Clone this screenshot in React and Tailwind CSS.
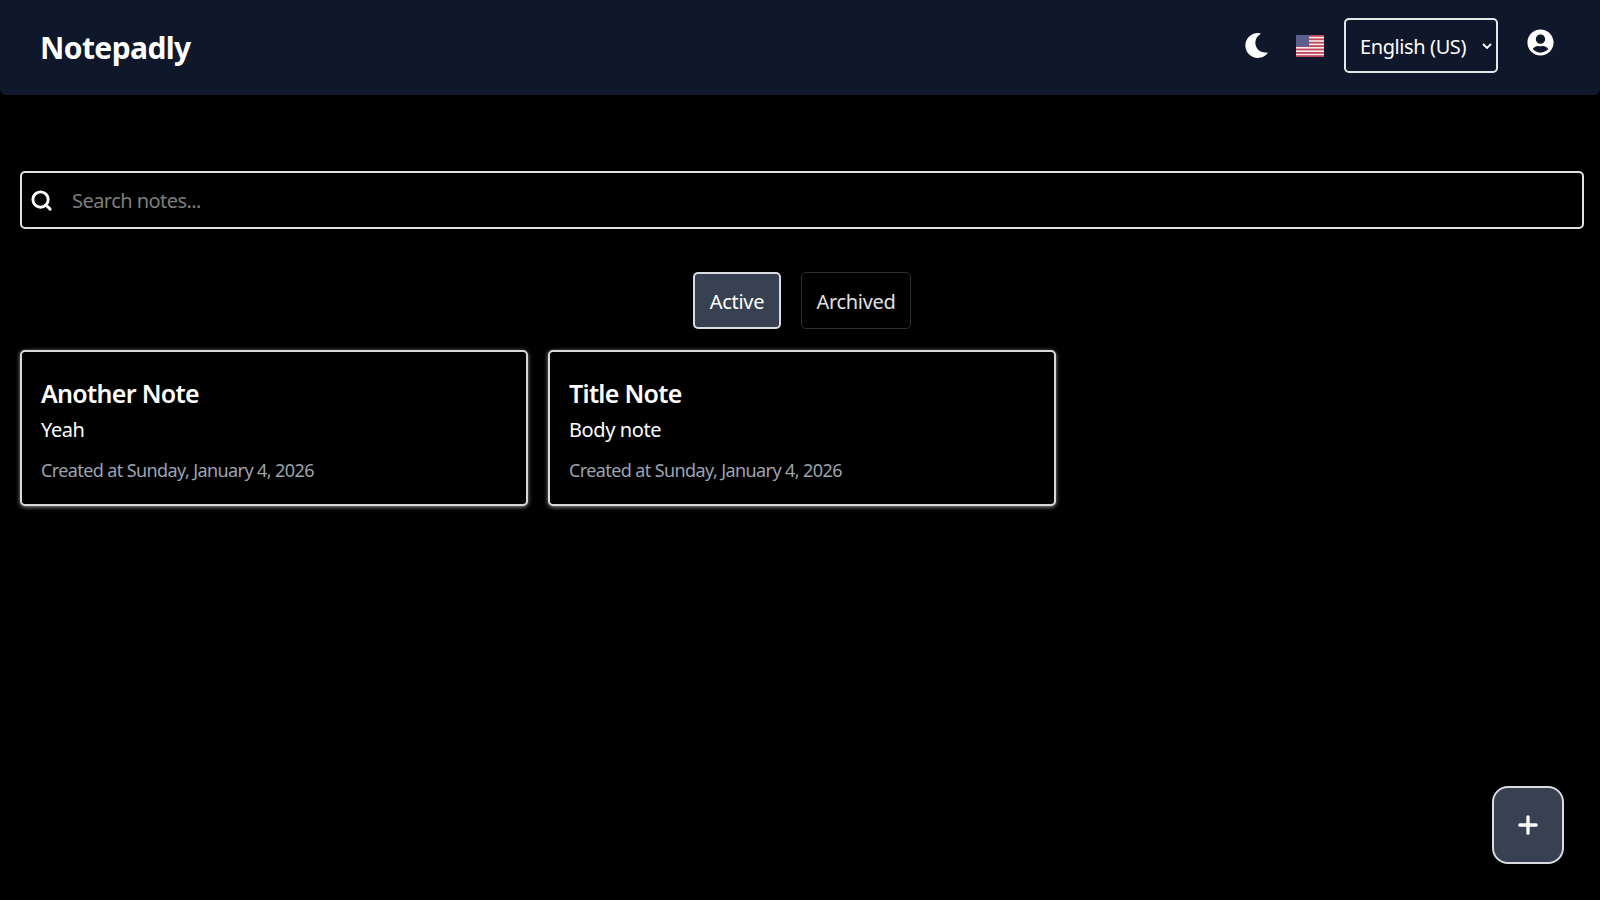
import React from "react";
import { FaMoon, FaUserCircle } from "react-icons/fa";
import { Plus, Search } from "lucide-react";

const notes = [
  { id: 1, title: "Another Note", body: "Yeah", created: "Created at Sunday, January 4, 2026" },
  { id: 2, title: "Title Note", body: "Body note", created: "Created at Sunday, January 4, 2026" },
];

function UsFlag() {
  return (
    <svg width="28" height="22" viewBox="0 0 28 22" className="block">
      <rect width="28" height="22" fill="#f3eeee" />
      {[0, 3.4, 6.8, 10.2, 13.6, 17, 20.2].map((y) => (
        <rect key={y} x="0" y={y} width="28" height="1.8" fill="#c2445a" />
      ))}
      <rect width="13" height="11.5" fill="#5a5f8c" />
    </svg>
  );
}

function NoteCard({ note }) {
  return (
    <div className="h-[156px] rounded-[5px] border-2 border-[#d8d8d8] bg-black pt-[22px] pl-[19px] shadow-[0_1px_4px_rgba(255,255,255,0.6)]">
      <h2 className="text-[25px] leading-[38px] font-semibold tracking-[-0.7px] text-white">{note.title}</h2>
      <p className="mt-[3px] text-[20px] leading-[30px] tracking-[-0.4px] text-white">{note.body}</p>
      <p className="mt-[10px] text-[18px] leading-[30px] tracking-[-0.6px] text-[#9ca3af]">{note.created}</p>
    </div>
  );
}

export default function App() {
  return (
    <div className="relative h-[900px] overflow-hidden bg-black font-['Noto_Sans',sans-serif] text-white">
      <header className="flex h-[95px] items-center justify-between rounded-b-[6px] bg-[#0f172a] pr-[46px] pb-[4px] pl-[40px]">
        <h1 className="pt-[4px] text-[30px] font-bold tracking-[-0.6px] text-white">Notepadly</h1>
        <div className="flex items-center">
          <FaMoon className="mr-[27px] text-[25px] text-white" />
          <div className="mr-[20px]">
            <UsFlag />
          </div>
          <div className="mr-[29px] flex h-[55px] w-[154px] items-center justify-between rounded-[5px] border-2 border-[#e5e7eb] pr-[3px] pl-[14px]">
            <span className="pt-[2px] text-[20px] tracking-[-0.4px] text-white">English (US)</span>
            <svg width="12" height="12" viewBox="0 0 12 12" fill="none" stroke="white" strokeWidth="1.8">
              <path d="M2 4l4 4 4-4" />
            </svg>
          </div>
          <FaUserCircle className="mb-[7px] text-[27px] text-white" />
        </div>
      </header>

      <main className="pt-[76px] pr-4 pl-5">
        <div className="flex h-[58px] items-center rounded-[5px] border-2 border-[#e0e0e0] pl-[8px]">
          <Search size={23} strokeWidth={3} className="text-white" />
          <span className="mt-[2px] ml-[19px] text-[20px] tracking-[-0.55px] text-[#7d7d7d]">Search notes...</span>
        </div>

        <div className="mt-[43px] flex justify-center gap-5">
          <button className="h-[57px] w-[88px] rounded-[5px] border-2 border-[#d8dbe0] bg-[#374151] pt-[3px] text-[20px] tracking-[-0.3px] text-white">
            Active
          </button>
          <button className="h-[57px] w-[110px] rounded-[5px] border border-[#2e2e2e] bg-black pt-[3px] text-[20px] tracking-[-0.3px] text-[#e0e0e0]">
            Archived
          </button>
        </div>

        <div className="mt-[21px] grid grid-cols-3 gap-5">
          {notes.map((n) => (
            <NoteCard key={n.id} note={n} />
          ))}
        </div>
      </main>

      <button className="absolute right-[36px] bottom-[36px] flex h-[78px] w-[72px] items-center justify-center rounded-[16px] border-2 border-[#d8dbe0] bg-[#374151]">
        <Plus size={28} strokeWidth={2.8} className="text-white" />
      </button>
    </div>
  );
}
